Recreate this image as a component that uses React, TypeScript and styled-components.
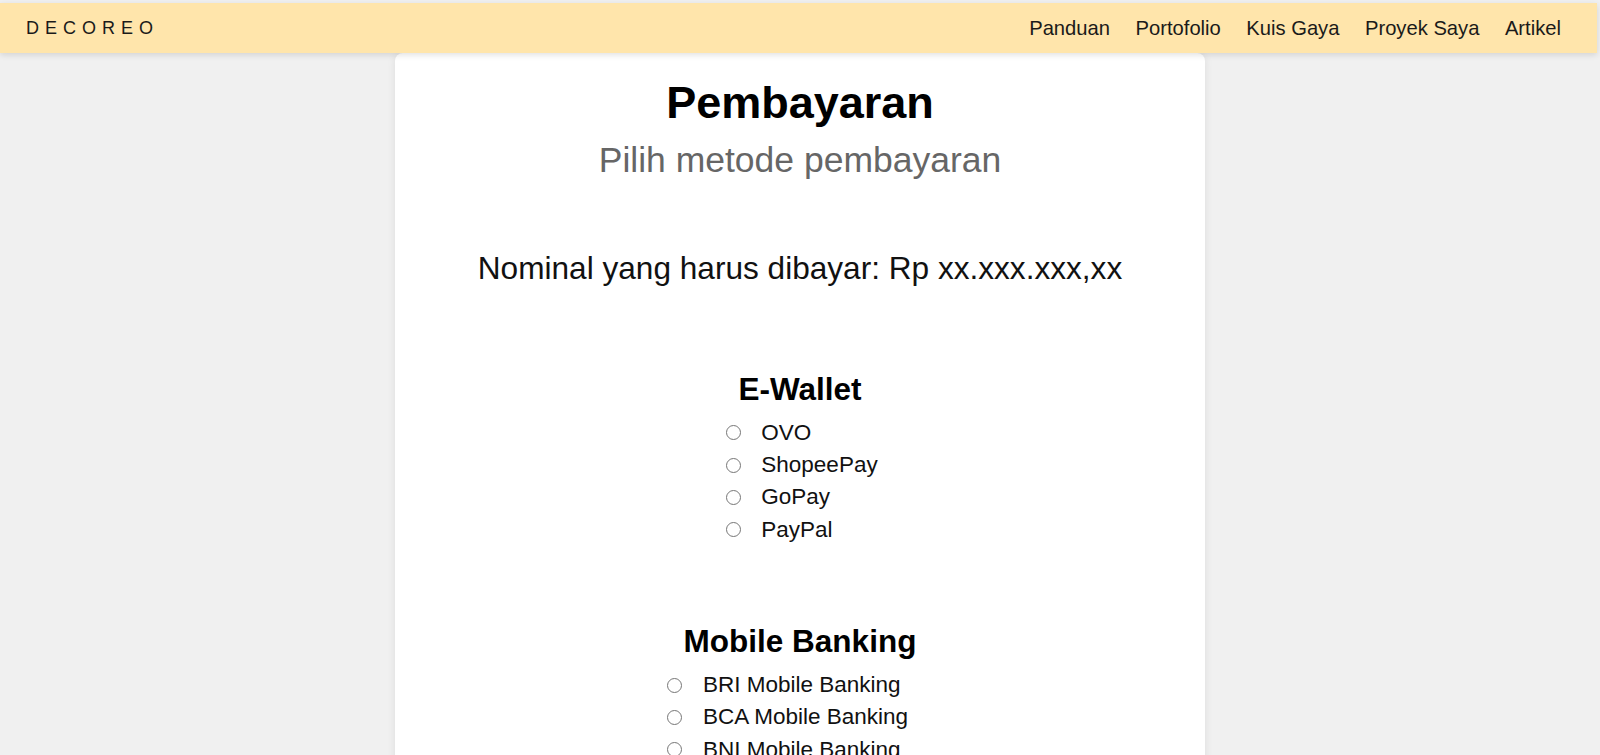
import React from "react";
import styled, { createGlobalStyle } from "styled-components";

const GlobalStyle = createGlobalStyle`
  html, body {
    margin: 0;
    padding: 0;
    background: #f0f0f0;
    font-family: "Liberation Sans", Arial, sans-serif;
    color: #111;
  }
  #root {
    min-height: 100vh;
  }
`;

const NavBar = styled.nav`
  margin: 3px 3px 0 0;
  height: 50px;
  background: #ffe5ab;
  box-shadow: 0 2px 6px rgba(0, 0, 0, 0.12);
  display: flex;
  align-items: center;
  justify-content: space-between;
  padding: 0 36px 0 26px;
  box-sizing: border-box;
  position: relative;
  z-index: 2;
`;

const Logo = styled.div`
  font-size: 18px;
  letter-spacing: 6px;
  color: #1a1a1a;
`;

const NavLinks = styled.div`
  display: flex;
  gap: 25.5px;
`;

const NavLink = styled.a`
  font-size: 20.2px;
  color: #1a1a1a;
  text-decoration: none;
  cursor: pointer;
`;

const Card = styled.main`
  width: 810px;
  margin: 0 auto;
  background: #fff;
  border-radius: 8px;
  box-shadow: 0 0 8px rgba(0, 0, 0, 0.08);
  padding: 23px 0 60px;
  text-align: center;
  position: relative;
  z-index: 1;
`;

const Title = styled.h1`
  margin: 0;
  font-size: 45px;
  line-height: 54px;
  font-weight: 700;
  color: #000;
`;

const Subtitle = styled.p`
  margin: 9px 0 0;
  font-size: 35.5px;
  line-height: 42.6px;
  color: #666;
`;

const Amount = styled.p`
  margin: 67px 0 0;
  font-size: 31.6px;
  line-height: 38px;
  color: #111;
`;

const Section = styled.section<{ $gap: number }>`
  margin-top: ${(p) => p.$gap}px;
`;

const SectionTitle = styled.h2`
  margin: 0;
  font-size: 31.5px;
  line-height: 37.2px;
  font-weight: 700;
  color: #000;
`;

const OptionList = styled.div<{ $shift: number }>`
  display: inline-flex;
  flex-direction: column;
  align-items: flex-start;
  margin-top: 9px;
  margin-left: ${(p) => (p.$shift > 0 ? p.$shift * 2 : 0)}px;
  margin-right: ${(p) => (p.$shift < 0 ? -p.$shift * 2 : 0)}px;
`;

const Option = styled.label`
  display: flex;
  align-items: center;
  height: 32.3px;
  font-size: 22.5px;
  line-height: 32.3px;
  color: #111;
  cursor: pointer;
`;

const Radio = styled.input.attrs({ type: "radio" })`
  appearance: none;
  -webkit-appearance: none;
  box-sizing: border-box;
  width: 15px;
  height: 15px;
  margin: 0 20.5px 0 -0.5px;
  border: 1.5px solid #767676;
  border-radius: 50%;
  background: #fff;
  flex-shrink: 0;
  cursor: pointer;

  &:checked {
    border-color: #1a73e8;
    box-shadow: inset 0 0 0 3px #fff;
    background: #1a73e8;
  }
`;

const groups = [
  {
    title: "E-Wallet",
    gap: 84,
    shift: 2,
    items: ["OVO", "ShopeePay", "GoPay", "PayPal"],
  },
  {
    title: "Mobile Banking",
    gap: 77,
    shift: -12,
    items: ["BRI Mobile Banking", "BCA Mobile Banking", "BNI Mobile Banking"],
  },
];

export default function App() {
  return (
    <>
      <GlobalStyle />
      <NavBar>
        <Logo>DECOREO</Logo>
        <NavLinks>
          <NavLink>Panduan</NavLink>
          <NavLink>Portofolio</NavLink>
          <NavLink>Kuis Gaya</NavLink>
          <NavLink>Proyek Saya</NavLink>
          <NavLink>Artikel</NavLink>
        </NavLinks>
      </NavBar>
      <Card>
        <Title>Pembayaran</Title>
        <Subtitle>Pilih metode pembayaran</Subtitle>
        <Amount>Nominal yang harus dibayar: Rp xx.xxx.xxx,xx</Amount>
        {groups.map((g) => (
          <Section key={g.title} $gap={g.gap}>
            <SectionTitle>{g.title}</SectionTitle>
            <OptionList $shift={g.shift}>
              {g.items.map((it) => (
                <Option key={it}>
                  <Radio name="payment" value={it} />
                  {it}
                </Option>
              ))}
            </OptionList>
          </Section>
        ))}
      </Card>
    </>
  );
}
